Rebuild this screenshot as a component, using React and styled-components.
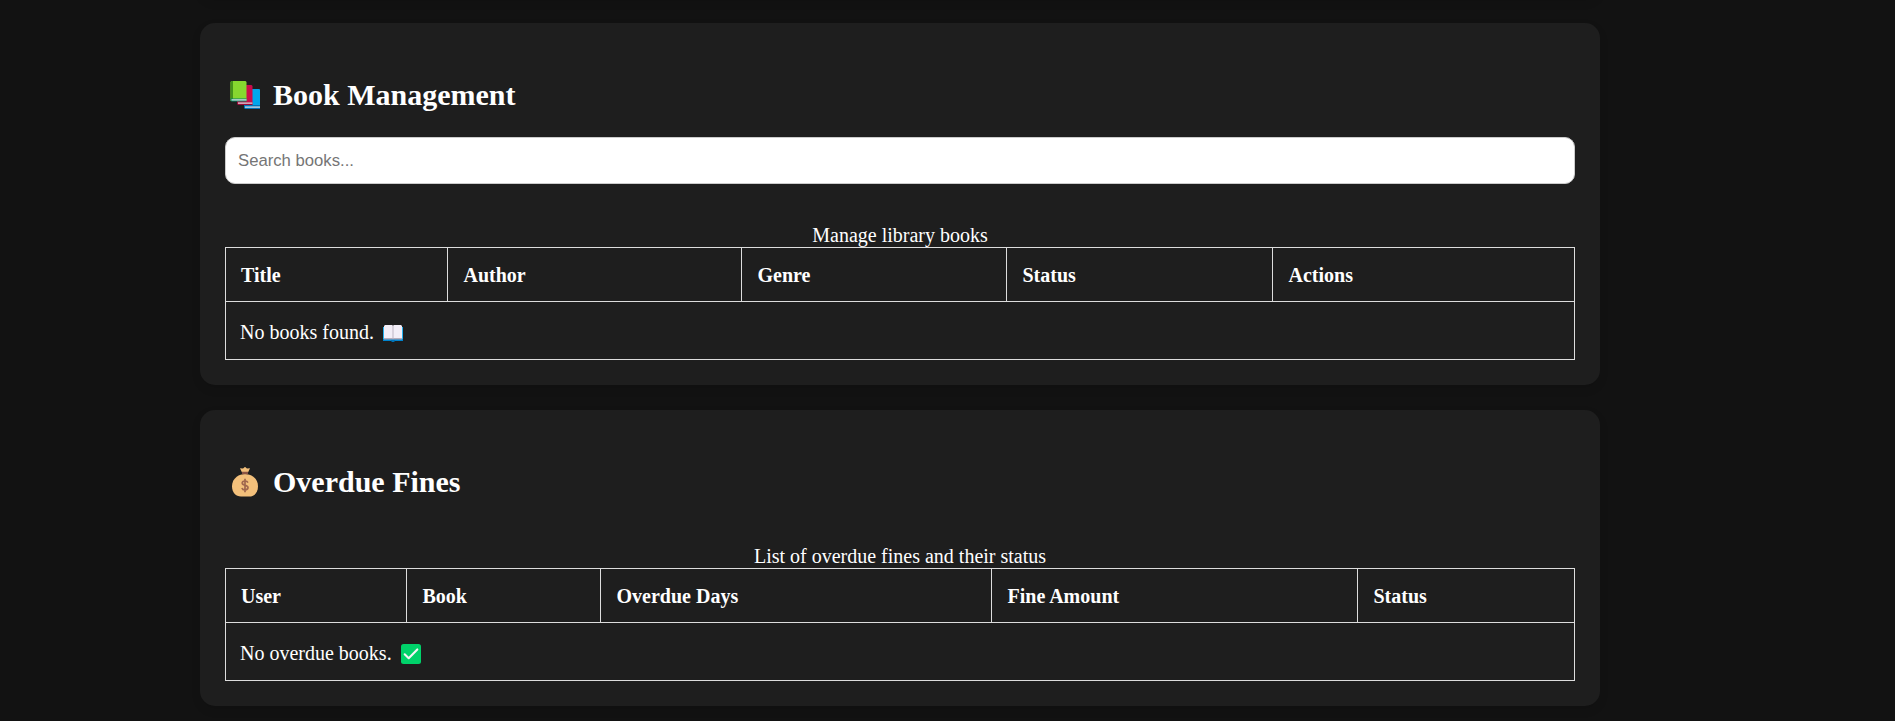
import React from "react";
import styled, { createGlobalStyle } from "styled-components";

const GlobalStyle = createGlobalStyle`
  * { box-sizing: border-box; }
  body {
    margin: 0;
    height: 721px;
    overflow: hidden;
    background: #121212;
    color: #fff;
    font: 20px/23px "Liberation Serif", "Times New Roman", serif;
  }
`;

const Page = styled.main`
  display: flex;
  flex-direction: column;
  gap: 25px;
  width: 1400px;
  margin: -52px 0 0 200px;
`;

const Card = styled.section`
  flex: none;
  height: ${(p) => p.$height}px;
  padding: 25px;
  border-radius: 15px;
  background: #1e1e1e;
  box-shadow: 0 4px 10px rgba(0, 0, 0, 0.1);
`;

const Heading = styled.h2`
  display: flex;
  align-items: center;
  gap: 7px;
  height: 39px;
  margin: 27px 0 23px;
  font-size: 30px;
  line-height: 39px;
  font-weight: 700;
`;

const HeadingIcon = styled.svg`
  flex: none;
  width: 31px;
  height: 31px;
  margin: 1px 5px 0;
`;

const Search = styled.input`
  display: block;
  width: 100%;
  height: 47px;
  margin-bottom: 20px;
  padding: 12px;
  border: 1px solid #ccc;
  border-radius: 10px;
  background: #fff;
  font: 16.7px "Liberation Sans", Arial, sans-serif;
  &::placeholder { color: #757575; }
`;

const Table = styled.table`
  width: 1350px;
  margin-top: ${(p) => p.$top}px;
  table-layout: fixed;
  border-collapse: collapse;
`;

const Caption = styled.caption`
  height: 23px;
`;

const HeadCell = styled.th`
  width: ${(p) => p.$width}px;
  height: 54px;
  padding: 1px 15px 0;
  border: 1px solid #ddd;
  text-align: left;

  &:not(:first-child) { padding-left: 15.5px; }
`;

const EmptyCell = styled.td`
  height: 58px;
  padding: 4px 14px 0;
  border: 1px solid #ddd;
`;

const EmptyMessage = styled.div`
  display: flex;
  align-items: center;
  gap: 9px;
`;

const SmallIcon = styled.svg`
  flex: none;
  width: 20px;
  height: 20px;
`;

function Books() {
  return (
    <HeadingIcon viewBox="0 0 31 31" aria-hidden="true">
      <path d="M14 9h15a1 1 0 0 1 1 1v18H14z" fill="#00a6ed" />
      <path d="M14 25h16v4H15l-1-1z" fill="#0074ba" />
      <path d="M15 26.500h15v1.200H15z" fill="#e8e8ec" />
      <path d="M7 5h14.5l1 1v18H7z" fill="#ca0b4a" />
      <path d="M7 22h15.5v3H8l-1-1z" fill="#990838" />
      <path d="M8 22.500h14.5v1.200H8z" fill="#e8e8ec" />
      <path d="M1.500 1h14l1 1v19H.5V2z" fill="#86d72f" />
      <path d="M1.500 1H3v18H.5V2z" fill="#44911b" />
      <path d="M.5 18.500h16v3H1.500l-1-1z" fill="#008463" />
      <path d="M1.500 19.300h15v1.200h-15z" fill="#e8e8ec" />
    </HeadingIcon>
  );
}

function MoneyBag() {
  return (
    <HeadingIcon viewBox="0 0.7 31 31" aria-hidden="true">
      <path d="M10 2l3 .2L15 .6l2 1.600 3-.2-2 4.200h-6z" fill="#f3c07b" />
      <path d="M15 7.800c3.300 0 5.800.8 8.300 2.700C26.300 12.800 28 16 28 20c0 6.500-3.800 10.300-9 10.300h-8C5.800 30.300 2 26.500 2 20c0-4 1.700-7.200 4.700-9.500C9.200 8.600 11.700 7.800 15 7.800z" fill="#f3c07b" />
      <path d="M12 5.500h6v2.700c-2-.5-4-.5-6 0z" fill="#8c5543" />
      <path d="M17.900 16.300c-.4-1.100-1.400-1.600-2.900-1.600-1.700 0-2.800.8-2.800 2.100 0 3.200 5.800 1.300 5.800 4.500 0 1.500-1.300 2.300-3 2.300s-2.700-.6-3.100-1.900M15 12.500v13.500" fill="none" stroke="#a0674e" strokeWidth="1.700" />
    </HeadingIcon>
  );
}

function OpenBook() {
  return (
    <SmallIcon viewBox="0 0 20 20" aria-hidden="true">
      <path d="M0 4h20v14h-8l-2 1-2-1H0z" fill="#0084ce" />
      <path d="M0 4h20v12H0z" fill="#26b1ef" />
      <path d="M1 15h18v1.500H1z" fill="#b4acbc" />
      <path d="M2 2h7l1 .8L11 2h7l1 1v12H1V3z" fill="#f3eef8" />
      <path d="M10 2.800V16" stroke="#bdb5c4" />
      <path d="M8 17h4v1l-2 1-2-1z" fill="#0074ba" />
    </SmallIcon>
  );
}

function CheckMark() {
  return (
    <SmallIcon viewBox="0 0 20 20" aria-hidden="true">
      <rect width="20" height="20" rx="2.500" fill="#00d26a" />
      <path d="m3.700 10.300 4 3.900 8.600-8.800" fill="none" stroke="#f4f4f4" strokeWidth="2.100" strokeLinecap="round" strokeLinejoin="round" />
    </SmallIcon>
  );
}

function DataTable({ caption, columns, top, message, icon }) {
  return (
    <Table $top={top}>
      <Caption>{caption}</Caption>
      <thead>
        <tr>
          {columns.map(([label, width]) => (
            <HeadCell key={label} $width={width}>{label}</HeadCell>
          ))}
        </tr>
      </thead>
      <tbody>
        <tr>
          <EmptyCell colSpan={columns.length}>
            <EmptyMessage>
              <span>{message}</span>
              {icon}
            </EmptyMessage>
          </EmptyCell>
        </tr>
      </tbody>
    </Table>
  );
}

const bookColumns = [["Title", 222], ["Author", 294], ["Genre", 265], ["Status", 266], ["Actions", 302]];
const fineColumns = [["User", 181], ["Book", 194], ["Overdue Days", 391], ["Fine Amount", 366], ["Status", 217]];

export default function App() {
  return (
    <>
      <GlobalStyle />
      <Page>
        <Card $height={50} aria-hidden="true" />
        <Card $height={362}>
          <Heading><Books /><span>Book Management</span></Heading>
          <Search placeholder="Search books..." aria-label="Search books" />
          <DataTable
            caption="Manage library books"
            columns={bookColumns}
            top={40}
            message="No books found."
            icon={<OpenBook />}
          />
        </Card>
        <Card $height={296}>
          <Heading><MoneyBag /><span>Overdue Fines</span></Heading>
          <DataTable
            caption="List of overdue fines and their status"
            columns={fineColumns}
            top={44}
            message="No overdue books."
            icon={<CheckMark />}
          />
        </Card>
      </Page>
    </>
  );
}
